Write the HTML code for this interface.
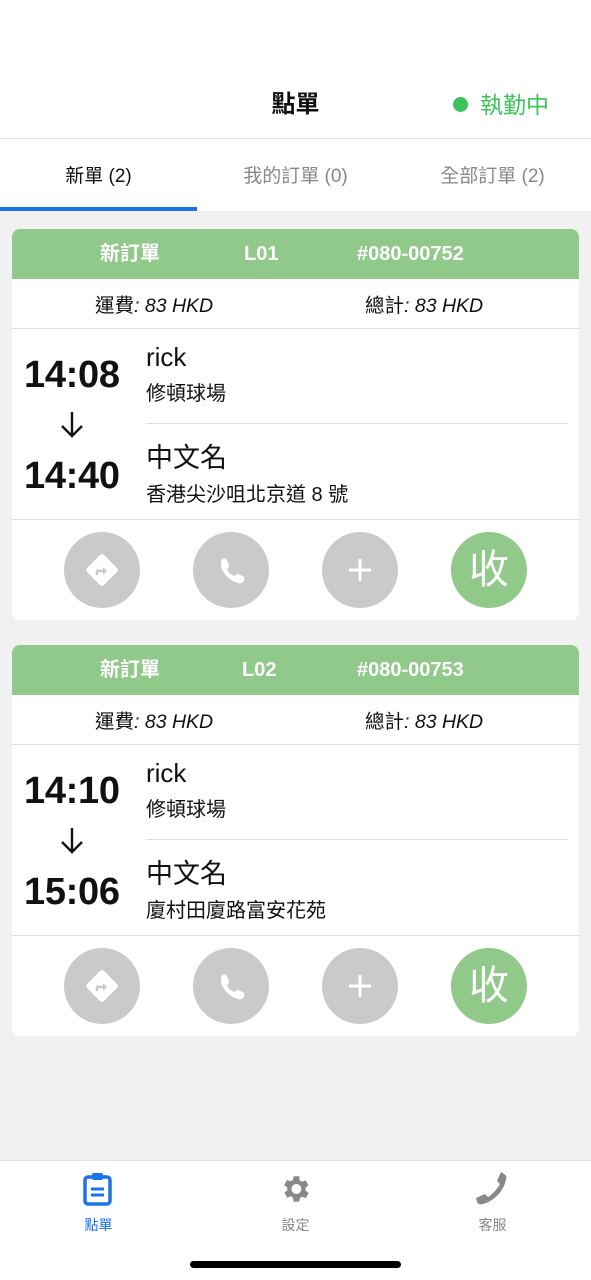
<!DOCTYPE html>
<html><head><meta charset="utf-8"><style>
*{margin:0;padding:0;box-sizing:border-box}
body{width:591px;height:1280px;background:#f1f1f1;font-family:"Liberation Sans","Noto Sans CJK TC",sans-serif;position:relative;overflow:hidden;color:#111}
.abs{position:absolute;line-height:1.2}
.top{left:0;top:0;width:591px;height:211px;background:#fff}
.card{position:absolute;left:12px;width:567px;height:391px;background:#fff;border-radius:8px;overflow:hidden}
.hd{height:50px;background:#90c98a;color:#fff;font-weight:bold;font-size:20px;position:relative}
.hd span{position:absolute;top:0;line-height:50px}
.fee{height:50px;border-bottom:1px solid #ddd;position:relative;font-size:19.5px}
.fee span{position:absolute;top:2px;line-height:50px}
.fee i{font-style:italic}
.body{height:191px;border-bottom:1px solid #ddd;position:relative}
.t{position:absolute;left:12px;font-size:38px;font-weight:bold;letter-spacing:-0.3px;line-height:46px}
.btn{position:absolute;top:303px;width:76px;height:76px;border-radius:50%;background:#cacaca}
</style></head><body>
<div class="abs top">
<div class="abs" style="left:0;width:591px;top:89px;text-align:center;font-size:24px;font-weight:bold;line-height:32px">點單</div>
<div class="abs" style="left:453px;top:97px;width:15px;height:15px;border-radius:50%;background:#3cc45a"></div>
<div class="abs" style="left:480px;top:89px;font-size:23px;color:#3cc45a;line-height:32px">執勤中</div>
<div class="abs" style="left:0;top:138px;width:591px;height:1px;background:#e2e2e2"></div>
<div class="abs" style="left:0;width:197px;top:164px;text-align:center;font-size:19px;color:#111;line-height:26px">新單 (2)</div>
<div class="abs" style="left:197px;width:197px;top:164px;text-align:center;font-size:19px;color:#888;line-height:26px">我的訂單 (0)</div>
<div class="abs" style="left:394px;width:197px;top:164px;text-align:center;font-size:19px;color:#888;line-height:26px">全部訂單 (2)</div>
<div class="abs" style="left:0;top:207px;width:197px;height:4px;background:#1a73e8"></div>
</div>

<div class="card" style="top:229px">
<div class="hd"><span style="left:88px">新訂單</span><span style="left:232px">L01</span><span style="left:345px">#080-00752</span></div>
<div class="fee"><span style="left:83px">運費<i>: 83 HKD</i></span><span style="left:353px">總計<i>: 83 HKD</i></span></div>
<div class="body">
<div class="t" style="top:23px">14:08</div>
<svg class="abs" style="left:46px;top:80px" width="28" height="30"><path d="M14 3v24M4 17l10 10 10-10" stroke="#111" stroke-width="2.4" fill="none"/></svg>
<div class="t" style="top:124px">14:40</div>
<div class="abs" style="left:134px;top:13px;font-size:26px">rick</div>
<div class="abs" style="left:134px;top:53px;font-size:20px">修頓球場</div>
<div class="abs" style="left:134px;top:94px;width:421px;height:1px;background:#ddd"></div>
<div class="abs" style="left:134px;top:113px;font-size:27px">中文名</div>
<div class="abs" style="left:134px;top:154px;font-size:20px">香港尖沙咀北京道 8 號</div>
</div>
<div class="btn" style="left:52px"><svg width="76" height="76"><rect x="26" y="26" width="24" height="24" transform="rotate(45 38 38)" rx="3" fill="#fff"/><path d="M33 43v-4h7" stroke="#cacaca" stroke-width="2.5" fill="none"/><path d="M39 35l4 4-4 4z" fill="#cacaca"/></svg></div>
<div class="btn" style="left:181px"><svg width="76" height="76"><path d="M29 27c2-1 4-1 5 1l2 5c0 2-1 3-2 4 1 3 4 6 7 7 1-1 2-2 4-2l5 2c1 1 2 3 1 5-2 2-4 3-6 2-8-2-15-9-17-17 0-3 0-5 1-7z" fill="#fff"/></svg></div>
<div class="btn" style="left:310px"><svg width="76" height="76"><path d="M38 27v22M27 38h22" stroke="#fff" stroke-width="3"/></svg></div>
<div class="btn" style="left:439px;background:#90c98a;color:#fff;font-size:40px;text-align:center;line-height:76px">收</div>
</div>

<div class="card" style="top:645px">
<div class="hd"><span style="left:88px">新訂單</span><span style="left:230px">L02</span><span style="left:345px">#080-00753</span></div>
<div class="fee"><span style="left:83px">運費<i>: 83 HKD</i></span><span style="left:353px">總計<i>: 83 HKD</i></span></div>
<div class="body">
<div class="t" style="top:23px">14:10</div>
<svg class="abs" style="left:46px;top:80px" width="28" height="30"><path d="M14 3v24M4 17l10 10 10-10" stroke="#111" stroke-width="2.4" fill="none"/></svg>
<div class="t" style="top:124px">15:06</div>
<div class="abs" style="left:134px;top:13px;font-size:26px">rick</div>
<div class="abs" style="left:134px;top:53px;font-size:20px">修頓球場</div>
<div class="abs" style="left:134px;top:94px;width:421px;height:1px;background:#ddd"></div>
<div class="abs" style="left:134px;top:113px;font-size:27px">中文名</div>
<div class="abs" style="left:134px;top:154px;font-size:20px">廈村田廈路富安花苑</div>
</div>
<div class="btn" style="left:52px"><svg width="76" height="76"><rect x="26" y="26" width="24" height="24" transform="rotate(45 38 38)" rx="3" fill="#fff"/><path d="M33 43v-4h7" stroke="#cacaca" stroke-width="2.5" fill="none"/><path d="M39 35l4 4-4 4z" fill="#cacaca"/></svg></div>
<div class="btn" style="left:181px"><svg width="76" height="76"><path d="M29 27c2-1 4-1 5 1l2 5c0 2-1 3-2 4 1 3 4 6 7 7 1-1 2-2 4-2l5 2c1 1 2 3 1 5-2 2-4 3-6 2-8-2-15-9-17-17 0-3 0-5 1-7z" fill="#fff"/></svg></div>
<div class="btn" style="left:310px"><svg width="76" height="76"><path d="M38 27v22M27 38h22" stroke="#fff" stroke-width="3"/></svg></div>
<div class="btn" style="left:439px;background:#90c98a;color:#fff;font-size:40px;text-align:center;line-height:76px">收</div>
</div>

<div class="abs" style="left:0;top:1160px;width:591px;height:120px;background:#fff;border-top:1px solid #e4e4e4">
<svg class="abs" style="left:82px;top:10px" width="32" height="36"><rect x="3" y="6" width="25" height="27" rx="3" fill="none" stroke="#1a73e8" stroke-width="3.5"/><rect x="10" y="2" width="11" height="7" rx="2" fill="#1a73e8"/><path d="M9 18h13M9 24h13" stroke="#1a73e8" stroke-width="3"/></svg>
<svg class="abs" style="left:278px;top:11px" width="34" height="34" viewBox="0 0 24 24"><path fill="#888" d="M19.4 13a7.5 7.5 0 000-2l2.1-1.6-2-3.5-2.5 1a7 7 0 00-1.7-1L15 3h-4l-.4 2.6a7 7 0 00-1.7 1l-2.5-1-2 3.5L6.6 11a7.5 7.5 0 000 2l-2.1 1.6 2 3.5 2.5-1a7 7 0 001.7 1L11 21h4l.4-2.6a7 7 0 001.7-1l2.5 1 2-3.5zM13 15.5a3.5 3.5 0 110-7 3.5 3.5 0 010 7z"/></svg>
<svg class="abs" style="left:474px;top:10px" width="36" height="36"><path d="M30 3c2 1 3 3 2 6C29 21 20 30 9 33c-3 1-5 0-6-2l-1-4 9-4 3 3c5-3 9-8 12-13l-3-3 4-9z" fill="#888"/></svg>
<div class="abs" style="left:0;width:197px;top:56px;text-align:center;font-size:14px;color:#1a73e8">點單</div>
<div class="abs" style="left:197px;width:197px;top:56px;text-align:center;font-size:14px;color:#888">設定</div>
<div class="abs" style="left:394px;width:197px;top:56px;text-align:center;font-size:14px;color:#888">客服</div>
<div class="abs" style="left:190px;top:100px;width:211px;height:7px;border-radius:4px;background:#000"></div>
</div>
</body></html>
